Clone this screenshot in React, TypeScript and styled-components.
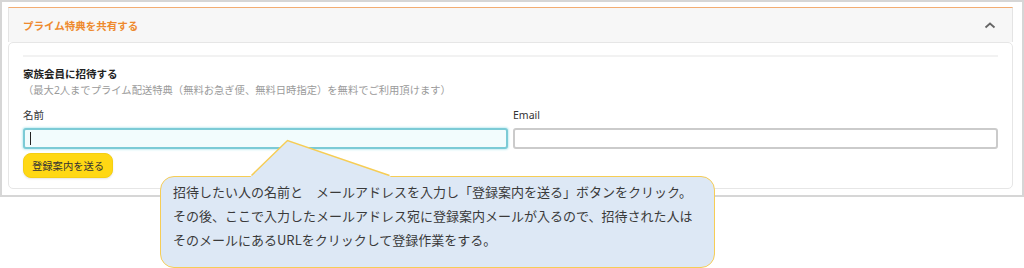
import { styled, createGlobalStyle } from "styled-components";

const GlobalStyle = createGlobalStyle`
  body {
    margin: 0;
    background: #fff;
    font-family: "Noto Sans", "Noto Sans CJK JP", sans-serif;
  }
`;

const Page = styled.div`
  position: relative;
  width: 1024px;
  height: 268px;
  overflow: hidden;
`;

const Frame = styled.div`
  box-sizing: border-box;
  width: 1024px;
  border: 2px solid #d6d6d6;
  padding: 5px 9px 6px 6px;
`;

const PanelHeader = styled.div`
  box-sizing: border-box;
  height: 35px;
  display: flex;
  align-items: center;
  justify-content: space-between;
  padding: 0 16px 0 14px;
  background: #f7f7f7;
  border-top: 1px solid #f3ad72;
  border-left: 1px solid #e4e4e4;
  border-right: 1px solid #e4e4e4;
`;

const HeaderTitle = styled.span`
  font-size: 10.5px;
  font-weight: 700;
  color: #ee8a2e;
`;

const Card = styled.div`
  border: 1px solid #e6e6e6;
  border-radius: 5px;
  padding: 12px 14px 10px 14px;
  background: #fff;
`;

const Divider = styled.div`
  height: 2px;
  background: #f2f2f2;
`;

const Title = styled.div`
  margin-top: 9px;
  font-size: 10.5px;
  line-height: 16px;
  font-weight: 700;
  color: #222;
`;

const Note = styled.div`
  font-size: 10.3px;
  line-height: 16px;
  color: #9a9a9a;
`;

const Fields = styled.div`
  margin-top: 9px;
  display: grid;
  grid-template-columns: 1fr 1fr;
  column-gap: 5px;
`;

const Field = styled.div`
  display: flex;
  flex-direction: column;
`;

const Label = styled.div`
  font-size: 10.5px;
  line-height: 16px;
  color: #333;
`;

const Input = styled.div<{ $focused?: boolean }>`
  box-sizing: border-box;
  margin-top: 5px;
  height: 21px;
  display: flex;
  align-items: center;
  padding: 0 5px;
  border-radius: 3px;
  border: 2px solid ${(p) => (p.$focused ? "#7ccbd6" : "#cbcbcb")};
  background: ${(p) => (p.$focused ? "#f2fcfd" : "#fff")};
  box-shadow: ${(p) => (p.$focused ? "0 0 2px 1px #c9eef3" : "none")};
`;

const Caret = styled.span`
  width: 1px;
  height: 13px;
  background: #222;
`;

const SendButton = styled.button`
  box-sizing: border-box;
  margin-top: 4px;
  height: 25px;
  padding: 0 8px;
  border: 1px solid #f5cf12;
  border-radius: 8px;
  background: #ffd814;
  color: #333;
  font-family: "Noto Sans CJK JP", sans-serif;
  font-size: 10.3px;
  box-shadow: 0 1px 2px rgba(0, 0, 0, 0.1);
`;

const Callout = styled.div`
  position: absolute;
  left: 160px;
  top: 176px;
  box-sizing: border-box;
  width: 555px;
  height: 92px;
  padding: 3px 12px 0 12px;
  background: #dde8f5;
  border: 1.5px solid #f6cd55;
  border-radius: 14px;
  font-family: "Noto Sans CJK JP", sans-serif;
  font-size: 13px;
  line-height: 24px;
  color: #3a3a3a;
`;

const Pointer = styled.svg`
  position: absolute;
  left: 88px;
  top: -37px;
  overflow: visible;
`;

const Chevron = () => (
  <svg width="12" height="8" viewBox="0 0 12 8">
    <polyline points="1.5,6.5 6,2.5 10.5,6.5" fill="none" stroke="#666" strokeWidth="1.8" />
  </svg>
);

export default function App() {
  return (
    <Page>
      <GlobalStyle />
      <Frame>
        <PanelHeader>
          <HeaderTitle>プライム特典を共有する</HeaderTitle>
          <Chevron />
        </PanelHeader>
        <Card>
          <Divider />
          <Title>家族会員に招待する</Title>
          <Note>（最大2人までプライム配送特典（無料お急ぎ便、無料日時指定）を無料でご利用頂けます）</Note>
          <Fields>
            <Field>
              <Label>名前</Label>
              <Input $focused>
                <Caret />
              </Input>
            </Field>
            <Field>
              <Label>Email</Label>
              <Input />
            </Field>
          </Fields>
          <SendButton>登録案内を送る</SendButton>
        </Card>
      </Frame>
      <Callout>
        <Pointer width="146" height="41">
          <polygon points="0,39.5 2.5,35.5 38.5,0.5 140.5,35.5 144,39.5" fill="#dde8f5" />
          <polyline points="2.5,35.5 38.5,0.5 140.5,35.5" fill="none" stroke="#f6cd55" strokeWidth="1.5" />
        </Pointer>
        <div>招待したい人の名前と　メールアドレスを入力し「登録案内を送る」ボタンをクリック。</div>
        <div>その後、ここで入力したメールアドレス宛に登録案内メールが入るので、招待された人は</div>
        <div>そのメールにあるURLをクリックして登録作業をする。</div>
      </Callout>
    </Page>
  );
}
